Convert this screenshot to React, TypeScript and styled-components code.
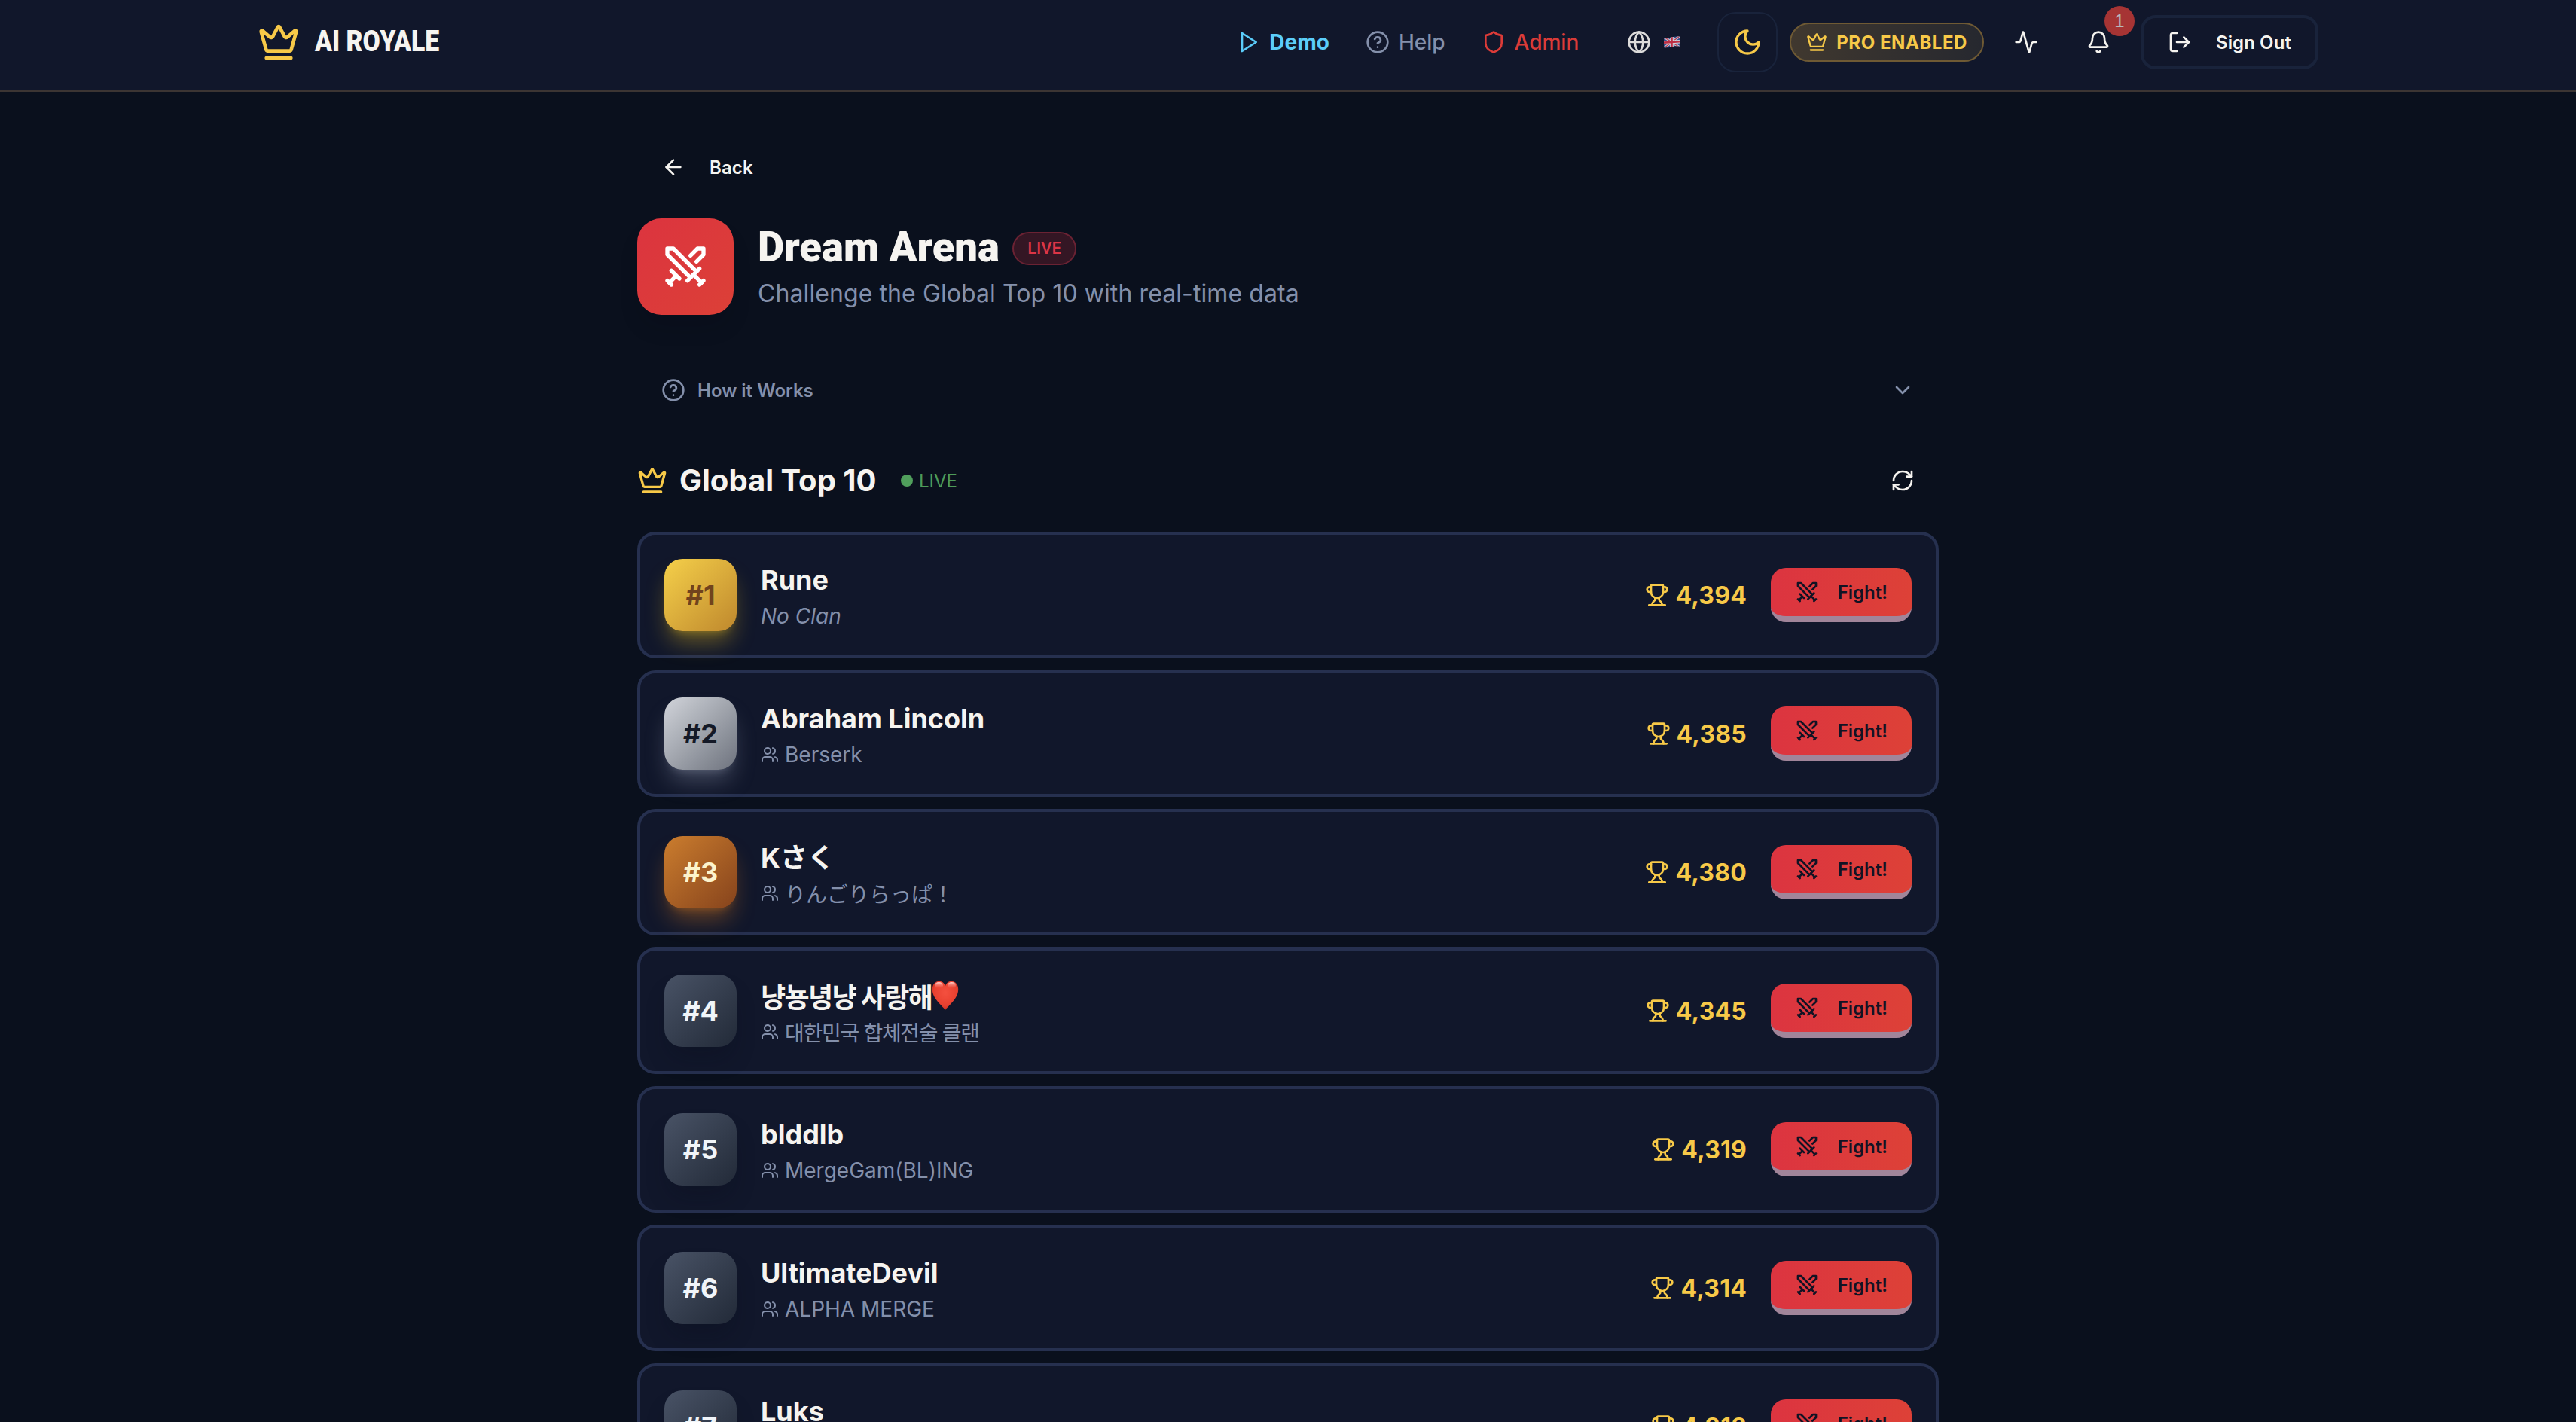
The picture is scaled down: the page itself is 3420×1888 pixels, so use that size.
import React from 'react';
import styled, { createGlobalStyle, css } from 'styled-components';
import {
  Activity,
  ArrowLeft,
  Bell,
  ChevronDown,
  CircleQuestionMark,
  Crown,
  Globe,
  LogOut,
  RefreshCw,
  Shield,
  Swords,
  Trophy,
  Users,
} from 'lucide-react';

const colors = {
  text: '#f6f4f0',
  muted: '#8490ab',
  gold: '#f7c948',
  card: '#11172b',
  border: '#26304f',
  outline: '#19233b',
  red: '#dc3b38',
};

const GlobalStyle = createGlobalStyle`
  * {
    box-sizing: border-box;
  }

  body {
    margin: 0;
    background: #0a101d;
    color: ${colors.text};
    font-family: Inter, 'Noto Sans CJK JP', 'Noto Sans CJK KR', sans-serif;
    -webkit-font-smoothing: antialiased;
  }

  svg {
    display: block;
    flex-shrink: 0;
  }
`;

const Page = styled.div`
  height: 1888px;
  overflow: hidden;
`;

const Header = styled.header`
  height: 122px;
  padding-top: 16px;
  background-color: ${colors.card};
  border-bottom: 2px solid #3c3533;
`;

const HeaderInner = styled.div`
  display: flex;
  align-items: center;
  justify-content: space-between;
  width: 2736px;
  height: 80px;
  margin: 0 auto;
`;

const Brand = styled.div`
  display: flex;
  align-items: center;
  gap: 20px;
  color: ${colors.gold};
`;

const displayFont = css`
  font-family: Roboto, sans-serif;
  font-weight: 900;
  color: ${colors.text};
  white-space: nowrap;
  transform-origin: left center;
`;

const BrandName = styled.span`
  ${displayFont}
  font-size: 38px;
  line-height: 56px;
  padding-bottom: 3px;
  transform: scaleX(0.888);
`;

const HeaderRight = styled.div`
  display: flex;
  align-items: center;
  gap: 16px;
`;

const Nav = styled.nav`
  display: flex;
  gap: 48px;
`;

const NavLink = styled.a<{ $color: string; $bold?: boolean }>`
  display: flex;
  align-items: center;
  gap: 12px;
  font-size: 28px;
  line-height: 40px;
  font-weight: ${({ $bold }) => ($bold ? 700 : 500)};
  color: ${({ $color }) => $color};
`;

const LanguageButton = styled.button`
  display: flex;
  align-items: center;
  gap: 17px;
  padding: 0 34px 0 48px;
  border: 0;
  background: none;
  color: #dddcdb;
`;

const IconButton = styled.button<{ $outlined?: boolean }>`
  position: relative;
  display: flex;
  align-items: center;
  justify-content: center;
  width: 80px;
  height: 80px;
  padding: 0;
  background: none;
  color: ${({ $outlined }) => ($outlined ? colors.gold : colors.text)};
  border: 2px solid ${({ $outlined }) => ($outlined ? colors.outline : 'transparent')};
  border-radius: 24px;
`;

const ProBadge = styled.div`
  display: flex;
  align-items: center;
  gap: 12px;
  height: 52px;
  padding: 0 20px;
  border: 2px solid #6f5a34;
  border-radius: 26px;
  background: linear-gradient(90deg, #40382f, #26282f);
  color: ${colors.gold};
  font-size: 24px;
  font-weight: 700;
  letter-spacing: 0.55px;
  white-space: nowrap;
`;

const Count = styled.span`
  position: absolute;
  top: -10px;
  right: -10px;
  width: 40px;
  height: 40px;
  border-radius: 50%;
  background: #a63434;
  color: #b9b8bb;
  font-size: 24px;
  line-height: 40px;
  font-weight: 500;
  text-align: center;
`;

const TextButton = styled.button<{ $outlined?: boolean }>`
  display: flex;
  align-items: center;
  gap: 32px;
  height: 72px;
  padding: 0 32px;
  background: none;
  color: ${colors.text};
  border: ${({ $outlined }) => ($outlined ? `4px solid ${colors.outline}` : '0')};
  border-radius: 20px;
  font: 600 24px Inter, sans-serif;
  letter-spacing: 0.1px;
  white-space: nowrap;
`;

const Main = styled.main`
  width: 1728px;
  margin: 0 auto;
  padding-top: 64px;
`;

const Hero = styled.section`
  display: flex;
  align-items: center;
  gap: 32px;
  margin-top: 32px;
`;

const HeroIcon = styled.div`
  display: flex;
  align-items: center;
  justify-content: center;
  width: 128px;
  height: 128px;
  border-radius: 32px;
  background: linear-gradient(135deg, #dc343f, #dc4037);
  box-shadow: 0 20px 30px -6px rgba(4, 6, 18, 0.15);
  color: #fff;
`;

const TitleRow = styled.div`
  display: flex;
  align-items: center;
  gap: 16px;
  height: 72px;
`;

const Title = styled.h1`
  ${displayFont}
  margin: 0;
  padding-bottom: 4px;
  font-size: 55px;
  line-height: 72px;
  width: 322px;
  transform: scaleX(0.99);
`;

const LiveBadge = styled.span`
  width: 85px;
  height: 44px;
  border: 2px solid #6b2233;
  border-radius: 22px;
  background: #341624;
  color: #dc3545;
  font: 500 22px/40px Roboto, sans-serif;
  text-align: center;
`;

const Subtitle = styled.p`
  margin: 0;
  font-size: 32px;
  line-height: 48px;
  letter-spacing: 0.09px;
  color: ${colors.muted};
`;

const HelpToggle = styled.button`
  display: flex;
  align-items: center;
  gap: 16px;
  width: 100%;
  height: 72px;
  margin-top: 64px;
  padding: 0 32px;
  border: 0;
  background: none;
  color: ${colors.muted};
  font: 600 24px Inter, sans-serif;

  svg:last-child {
    margin-left: auto;
  }
`;

const SectionHeader = styled.div`
  display: flex;
  align-items: center;
  height: 72px;
  margin-top: 48px;
  padding-right: 32px;
  color: ${colors.gold};
`;

const SectionTitle = styled.h2`
  width: 262px;
  margin: 0 32px 0 16px;
  font-size: 40px;
  line-height: 56px;
  font-weight: 700;
  white-space: nowrap;
  color: ${colors.text};
`;

const LiveStatus = styled.span`
  display: flex;
  align-items: center;
  gap: 8px;
  flex: 1;
  font-size: 24px;
  color: #4d9b59;

  &::before {
    content: '';
    width: 16px;
    height: 16px;
    border-radius: 50%;
    background: #509f5c;
  }
`;

const RefreshIcon = styled(RefreshCw)`
  color: ${colors.text};
`;

const PlayerList = styled.div`
  display: flex;
  flex-direction: column;
  gap: 16px;
  margin-top: 32px;
`;

const PlayerCard = styled.article`
  display: flex;
  align-items: center;
  gap: 32px;
  height: 168px;
  padding: 0 32px;
  border: 4px solid ${colors.border};
  border-radius: 24px;
  background: ${colors.card};
`;

const rankStyles: Record<number, ReturnType<typeof css>> = {
  1: css`
    background: linear-gradient(135deg, #f5d04a, #bf882d);
    box-shadow: 0 20px 30px -6px rgba(234, 190, 30, 0.4), 0 8px 12px -8px rgba(234, 190, 30, 0.4);
    color: #71431d;
  `,
  2: css`
    background: linear-gradient(135deg, #d1d4da, #6e737e);
    box-shadow: 0 20px 30px -6px rgba(156, 163, 185, 0.36), 0 8px 12px -8px rgba(156, 163, 185, 0.36);
    color: #141927;
  `,
  3: css`
    background: linear-gradient(135deg, #cb7d2e, #86431c);
    box-shadow: 0 20px 30px -6px rgba(225, 125, 30, 0.4), 0 8px 12px -8px rgba(225, 125, 30, 0.4);
    color: #fcf3cc;
  `,
};

const Rank = styled.div<{ $rank: number }>`
  display: flex;
  align-items: center;
  justify-content: center;
  width: 96px;
  height: 96px;
  border-radius: 24px;
  font-size: 36px;
  font-weight: 700;
  background: linear-gradient(135deg, #495366, #222a38);
  box-shadow: 0 20px 30px -6px rgba(8, 10, 24, 0.25);
  color: #f1f5f9;
  ${({ $rank }) => rankStyles[$rank]}
`;

const PlayerInfo = styled.div`
  flex: 1;
`;

type Script = 'ja' | 'ko';

const PlayerName = styled.div<{ $script?: Script }>`
  display: flex;
  align-items: center;
  height: 56px;
  padding-bottom: ${({ $script }) => ($script === 'ja' ? 4 : 0)}px;
  font-size: 36px;
  font-weight: 700;
  letter-spacing: ${({ $script }) => ($script === 'ko' ? '-1.65px' : 'normal')};
`;

const Clan = styled.div<{ $empty?: boolean; $script?: Script }>`
  display: flex;
  align-items: center;
  gap: 8px;
  height: 40px;
  font-size: 28px;
  font-style: ${({ $empty }) => ($empty ? 'italic' : 'normal')};
  letter-spacing: ${({ $script }) => ($script === 'ko' ? '-1.3px' : 'normal')};
  color: ${colors.muted};
`;

const Trophies = styled.div`
  display: flex;
  align-items: center;
  gap: 8px;
  font-size: 32px;
  font-weight: 700;
  letter-spacing: 0.2px;
  color: ${colors.gold};
`;

const FightButton = styled.button`
  display: flex;
  align-items: center;
  justify-content: space-between;
  width: 187px;
  height: 72px;
  padding: 0 32px;
  border: 0;
  border-bottom: 8px solid #a1859a;
  border-radius: 20px;
  background: linear-gradient(90deg, #dc3440, #dd4137);
  color: #121324;
  font: 600 24px Inter, sans-serif;
`;

const PlayIcon = () => (
  <svg width="32" height="32" viewBox="0 0 24 24" fill="none" stroke="currentColor" strokeWidth="2">
    <polygon points="6 3 20 12 6 21 6 3" strokeLinejoin="round" />
  </svg>
);

const MoonIcon = () => (
  <svg
    width="40"
    height="40"
    viewBox="0 0 24 24"
    fill="none"
    stroke="currentColor"
    strokeWidth="2"
    strokeLinecap="round"
    strokeLinejoin="round"
  >
    <path d="M12 3a6 6 0 0 0 9 9 9 9 0 1 1-9-9Z" />
  </svg>
);

const UkFlag = () => (
  <svg width="21" height="16" viewBox="0 0 21 16">
    <defs>
      <clipPath id="wave">
        <path d="M0 2C4 3 8 2 11 1.200S18 .2 21 .8V13.600C17 12.800 14 13.600 10 14.400S3 15.600 0 15Z" />
      </clipPath>
    </defs>
    <g clipPath="url(#wave)">
      <rect width="21" height="16" fill="#35508f" />
      <path d="M0 1 21 15M21 0 0 16" stroke="#c9cad6" strokeWidth="3.2" />
      <path d="M0 1 21 15M21 0 0 16" stroke="#b8364c" strokeWidth="1.2" />
      <path d="M10.500 0v16M0 8.600 21 7.200" stroke="#d5d3db" strokeWidth="4.6" />
      <path d="M10.500 0v16M0 8.600 21 7.200" stroke="#bd2f45" strokeWidth="2.6" />
    </g>
  </svg>
);

const HeartIcon = () => (
  <svg width="36" height="40" viewBox="0 0 36 40">
    <defs>
      <radialGradient id="heart" cx="0.5" cy="0.4" r="0.65">
        <stop offset="0" stopColor="#f4503f" />
        <stop offset="0.7" stopColor="#e8402f" />
        <stop offset="1" stopColor="#b3261c" />
      </radialGradient>
      <linearGradient id="shine" x1="0" y1="0" x2="0" y2="1">
        <stop offset="0" stopColor="#ffd9d4" />
        <stop offset="1" stopColor="#f4503f" stopOpacity="0" />
      </linearGradient>
    </defs>
    <path
      d="M18 39C13 32 .8 24 .8 11.500C.8 5 4.800.8 9.800.8c4 0 7 2.600 8.200 6.400C19.200 3.400 22.200.8 26.200.8c5 0 9 4.200 9 10.700C35.200 24 23 32 18 39Z"
      fill="url(#heart)"
    />
    <ellipse cx="9.500" cy="6.500" rx="5.500" ry="4.500" fill="url(#shine)" />
    <ellipse cx="26.500" cy="6.500" rx="5.500" ry="4.500" fill="url(#shine)" />
  </svg>
);

interface Player {
  name: string;
  clan?: string;
  trophies: string;
  script?: Script;
  heart?: boolean;
}

const players: Player[] = [
  { name: 'Rune', trophies: '4,394' },
  { name: 'Abraham Lincoln', clan: 'Berserk', trophies: '4,385' },
  { name: 'Kさく', clan: 'りんごりらっぱ！', trophies: '4,380', script: 'ja' },
  { name: '냥뇽녕냥 사랑해', clan: '대한민국 합체전술 클랜', trophies: '4,345', script: 'ko', heart: true },
  { name: 'blddlb', clan: 'MergeGam(BL)ING', trophies: '4,319' },
  { name: 'UltimateDevil', clan: 'ALPHA MERGE', trophies: '4,314' },
  { name: 'Luks', trophies: '4,313' },
];

const PlayerRow: React.FC<{ player: Player; rank: number }> = ({ player, rank }) => (
  <PlayerCard>
    <Rank $rank={rank}>#{rank}</Rank>
    <PlayerInfo>
      <PlayerName $script={player.script}>
        {player.name}
        {player.heart && <HeartIcon />}
      </PlayerName>
      <Clan $empty={!player.clan} $script={player.script}>
        {player.clan && <Users size={24} />}
        {player.clan || 'No Clan'}
      </Clan>
    </PlayerInfo>
    <Trophies>
      <Trophy size={32} />
      {player.trophies}
    </Trophies>
    <FightButton>
      <Swords size={32} />
      Fight!
    </FightButton>
  </PlayerCard>
);

const App: React.FC = () => (
  <Page>
    <GlobalStyle />
    <Header>
      <HeaderInner>
        <Brand>
          <Crown size={56} />
          <BrandName>AI ROYALE</BrandName>
        </Brand>
        <HeaderRight>
          <Nav>
            <NavLink $color="#5bcdfa" $bold>
              <PlayIcon />
              Demo
            </NavLink>
            <NavLink $color={colors.muted}>
              <CircleQuestionMark size={32} />
              Help
            </NavLink>
            <NavLink $color={colors.red}>
              <Shield size={32} />
              Admin
            </NavLink>
          </Nav>
          <LanguageButton>
            <Globe size={32} />
            <UkFlag />
          </LanguageButton>
          <IconButton $outlined>
            <MoonIcon />
          </IconButton>
          <ProBadge>
            <Crown size={28} />
            PRO ENABLED
          </ProBadge>
          <IconButton>
            <Activity size={32} />
          </IconButton>
          <IconButton>
            <Bell size={32} />
            <Count>1</Count>
          </IconButton>
          <TextButton $outlined>
            <LogOut size={32} />
            Sign Out
          </TextButton>
        </HeaderRight>
      </HeaderInner>
    </Header>
    <Main>
      <TextButton>
        <ArrowLeft size={32} />
        Back
      </TextButton>
      <Hero>
        <HeroIcon>
          <Swords size={64} />
        </HeroIcon>
        <div>
          <TitleRow>
            <Title>Dream Arena</Title>
            <LiveBadge>LIVE</LiveBadge>
          </TitleRow>
          <Subtitle>Challenge the Global Top 10 with real-time data</Subtitle>
        </div>
      </Hero>
      <HelpToggle>
        <CircleQuestionMark size={32} />
        How it Works
        <ChevronDown size={32} />
      </HelpToggle>
      <SectionHeader>
        <Crown size={40} />
        <SectionTitle>Global Top 10</SectionTitle>
        <LiveStatus>LIVE</LiveStatus>
        <RefreshIcon size={32} />
      </SectionHeader>
      <PlayerList>
        {players.map((player, i) => (
          <PlayerRow key={player.name} player={player} rank={i + 1} />
        ))}
      </PlayerList>
    </Main>
  </Page>
);

export default App;
